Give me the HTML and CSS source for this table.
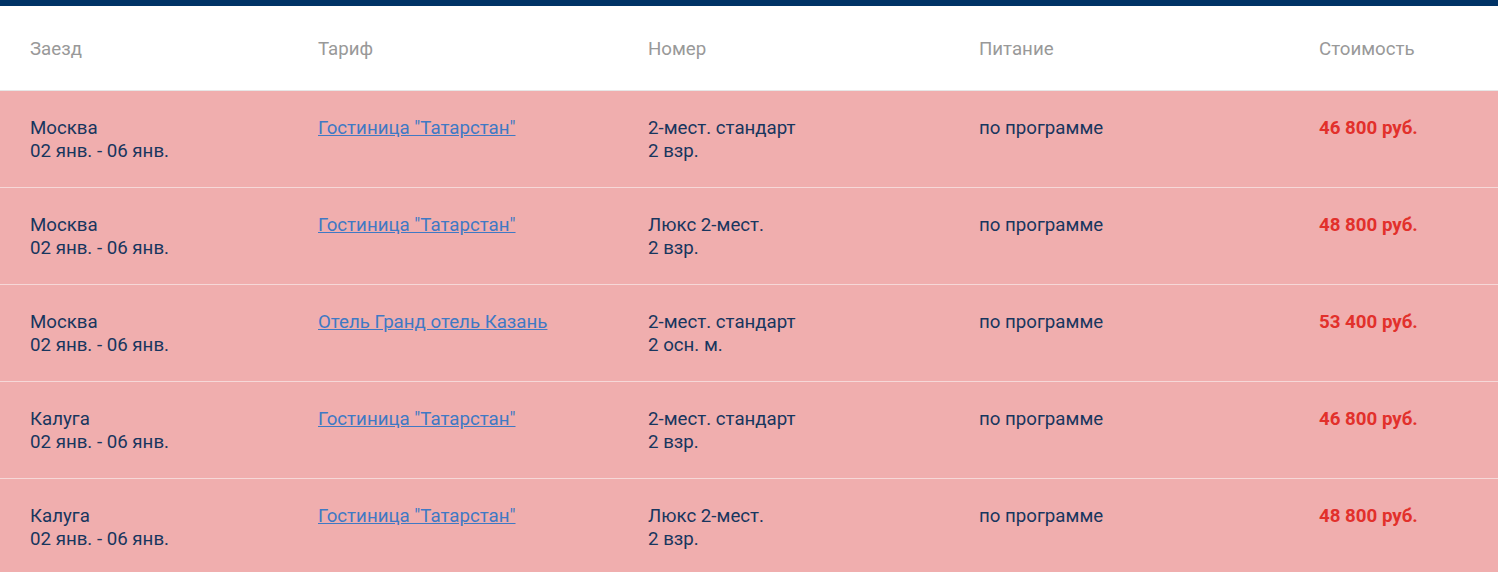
FILE: index.html
```html
<!DOCTYPE html>
<html lang="ru">
<head>
<meta charset="utf-8">
<link rel="stylesheet" href="styles.css">
</head>
<body>
<div class="topbar"></div>
<div class="table">
  <div class="row head">
    <div class="cell">Заезд</div>
    <div class="cell">Тариф</div>
    <div class="cell">Номер</div>
    <div class="cell">Питание</div>
    <div class="cell">Стоимость</div>
  </div>
  <div class="row item">
    <div class="cell">Москва<br>02 янв. - 06 янв.</div>
    <div class="cell"><a href="#">Гостиница "Татарстан"</a></div>
    <div class="cell">2-мест. стандарт<br>2 взр.</div>
    <div class="cell">по программе</div>
    <div class="cell price">46 800 руб.</div>
  </div>
  <div class="row item">
    <div class="cell">Москва<br>02 янв. - 06 янв.</div>
    <div class="cell"><a href="#">Гостиница "Татарстан"</a></div>
    <div class="cell">Люкс 2-мест.<br>2 взр.</div>
    <div class="cell">по программе</div>
    <div class="cell price">48 800 руб.</div>
  </div>
  <div class="row item">
    <div class="cell">Москва<br>02 янв. - 06 янв.</div>
    <div class="cell"><a href="#">Отель Гранд отель Казань</a></div>
    <div class="cell">2-мест. стандарт<br>2 осн. м.</div>
    <div class="cell">по программе</div>
    <div class="cell price">53 400 руб.</div>
  </div>
  <div class="row item">
    <div class="cell">Калуга<br>02 янв. - 06 янв.</div>
    <div class="cell"><a href="#">Гостиница "Татарстан"</a></div>
    <div class="cell">2-мест. стандарт<br>2 взр.</div>
    <div class="cell">по программе</div>
    <div class="cell price">46 800 руб.</div>
  </div>
  <div class="row item">
    <div class="cell">Калуга<br>02 янв. - 06 янв.</div>
    <div class="cell"><a href="#">Гостиница "Татарстан"</a></div>
    <div class="cell">Люкс 2-мест.<br>2 взр.</div>
    <div class="cell">по программе</div>
    <div class="cell price">48 800 руб.</div>
  </div>
</div>
</body>
</html>
```
FILE: styles.css
```css
html, body {
  margin: 0;
  padding: 0;
  background: #fff;
}
body {
  font-family: Roboto, "Liberation Sans", sans-serif;
  font-size: 18.7px;
  line-height: 23px;
  color: #18365e;
}
.topbar {
  height: 6px;
  background: #003366;
}
.table {
  display: flex;
  flex-direction: column;
}
.row {
  display: grid;
  grid-template-columns: 288px 330px 331px 340px 1fr;
  padding-left: 30px;
}
.head {
  height: 85px;
  box-sizing: border-box;
  padding-top: 32px;
  color: #999999;
  border-bottom: 1px solid #e6e6e6;
}
.item {
  background: #f0aeae;
  height: 97px;
  box-sizing: border-box;
  padding-top: 26px;
  border-bottom: 1px solid #f6d8d8;
}
.item a {
  color: #3f79c4;
  text-decoration: underline;
}
.price {
  color: #e2302b;
  font-weight: 700;
}
```
